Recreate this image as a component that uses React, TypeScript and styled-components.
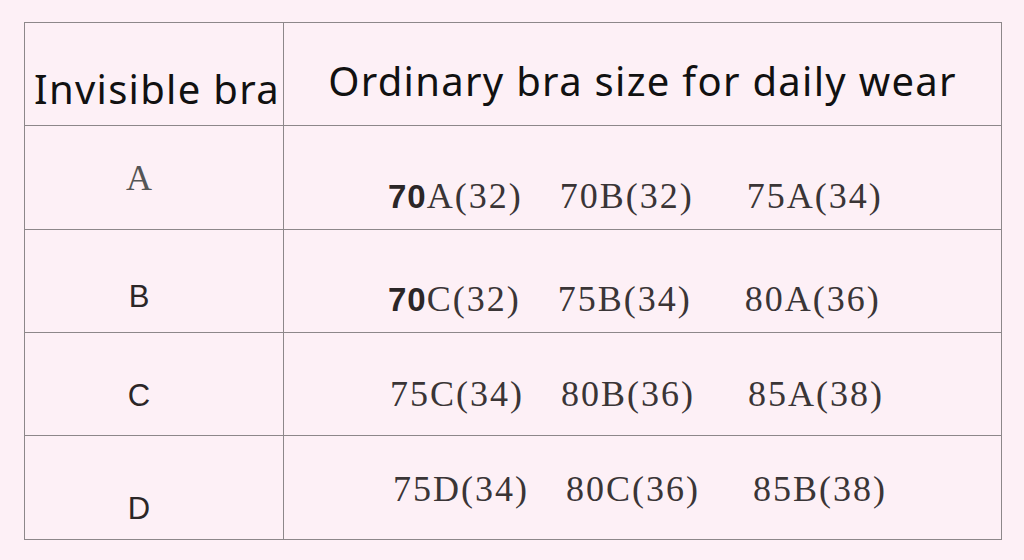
import styled, { createGlobalStyle } from 'styled-components';

const GlobalStyle = createGlobalStyle`
  body {
    margin: 0;
    background: #fdf0f6;
  }
`;

const Page = styled.div`
  width: 1024px;
  height: 560px;
  padding: 22px 0 0 24px;
  box-sizing: border-box;
`;

const Table = styled.div`
  display: grid;
  grid-template-columns: 258px 717px;
  grid-template-rows: 102px 103px 102px 102px 103px;
  gap: 1px;
  padding: 1px;
  width: 978px;
  box-sizing: border-box;
  background: #8d878a;
`;

const Cell = styled.div<{ $shift?: number; $right?: number; $left?: number }>`
  display: flex;
  align-items: center;
  justify-content: center;
  background: #fdf0f6;
  padding-top: ${(p) => (p.$shift ?? 0) * 2}px;
  padding-right: ${(p) => p.$right ?? 0}px;
  padding-left: ${(p) => p.$left ?? 0}px;
  box-sizing: border-box;
`;

const HeadText = styled.span`
  font-family: 'Noto Sans', 'Open Sans', sans-serif;
  font-size: 40px;
  letter-spacing: 1.3px;
  line-height: 1;
  color: #111;
  white-space: nowrap;
`;

const SerifLetter = styled.span`
  font-family: 'Liberation Serif', serif;
  font-size: 36px;
  line-height: 1;
  color: #555;
`;

const SansLetter = styled.span`
  font-family: 'Liberation Sans', Arial, sans-serif;
  font-size: 31px;
  line-height: 1;
  color: #2b2627;
`;

const SizeRow = styled.div<{ $shift: number; $left: number }>`
  display: flex;
  align-items: center;
  background: #fdf0f6;
  padding-top: ${(p) => p.$shift * 2}px;
  padding-left: ${(p) => p.$left}px;
  gap: 37px;
  box-sizing: border-box;

  & > span:nth-child(2) {
    margin-right: 16px;
  }
`;

const Size = styled.span`
  font-family: 'Liberation Serif', serif;
  font-size: 36px;
  letter-spacing: 2px;
  line-height: 1;
  color: #3a3536;
  white-space: nowrap;
`;

const Bold = styled.b`
  font-family: 'Liberation Sans', Arial, sans-serif;
  font-weight: bold;
  font-size: 33px;
  letter-spacing: 1px;
  color: #2b2627;
`;

type Row = {
  cup: string;
  serif?: boolean;
  cupShift: number;
  sizeShift: number;
  left: number;
  sizes: string[];
  bold?: boolean;
};

const rows: Row[] = [
  { cup: 'A', serif: true, cupShift: -1, sizeShift: 18, left: 104, sizes: ['70A(32)', '70B(32)', '75A(34)'], bold: true },
  { cup: 'B', cupShift: 15, sizeShift: 18, left: 104, sizes: ['70C(32)', '75B(34)', '80A(36)'], bold: true },
  { cup: 'C', cupShift: 11, sizeShift: 10, left: 106, sizes: ['75C(34)', '80B(36)', '85A(38)'] },
  { cup: 'D', cupShift: 21, sizeShift: 1, left: 109, sizes: ['75D(34)', '80C(36)', '85B(38)'] },
];

const App: React.FC = () => {
  return (
    <>
      <GlobalStyle />
      <Page>
        <Table>
          <Cell $shift={15} $left={6}>
            <HeadText>Invisible bra</HeadText>
          </Cell>
          <Cell $shift={7}>
            <HeadText>Ordinary bra size for daily wear</HeadText>
          </Cell>
          {rows.map((row) => (
            <>
              <Cell key={row.cup} $shift={row.cupShift} $right={30}>
                {row.serif ? <SerifLetter>{row.cup}</SerifLetter> : <SansLetter>{row.cup}</SansLetter>}
              </Cell>
              <SizeRow key={row.cup + '-sizes'} $shift={row.sizeShift} $left={row.left}>
                {row.sizes.map((size, i) =>
                  row.bold && i === 0 ? (
                    <Size key={size}>
                      <Bold>{size.slice(0, 2)}</Bold>
                      {size.slice(2)}
                    </Size>
                  ) : (
                    <Size key={size}>{size}</Size>
                  ),
                )}
              </SizeRow>
            </>
          ))}
        </Table>
      </Page>
    </>
  );
};

export default App;
